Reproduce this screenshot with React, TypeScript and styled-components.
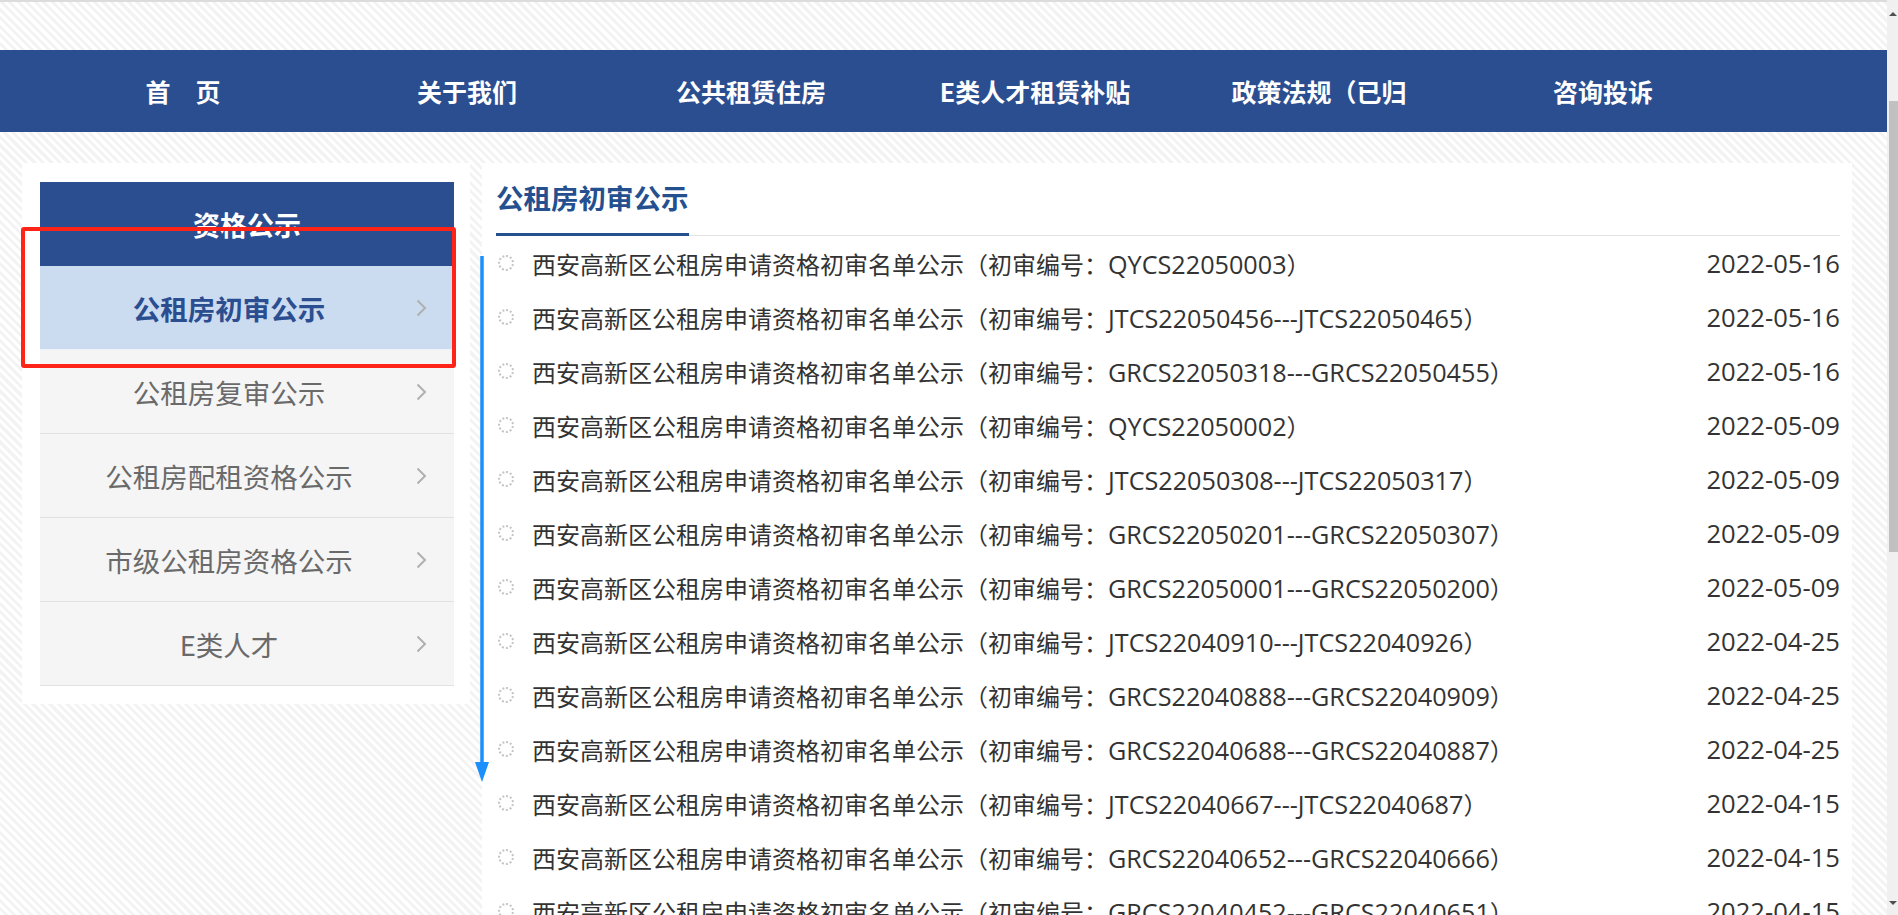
import styled, { createGlobalStyle } from "styled-components";

const GlobalStyle = createGlobalStyle`
  html, body {
    margin: 0;
    padding: 0;
    overflow: hidden;
  }
  body {
    font-family: "Open Sans", "Noto Sans CJK SC", sans-serif;
    color: #333;
  }
`;

const BLUE = "#2b4e90";

const Frame = styled.div`
  display: flex;
  height: 915px;
  overflow: hidden;
`;

const Page = styled.div`
  flex: 1;
  position: relative;
  overflow: hidden;
  background: repeating-linear-gradient(45deg, #ffffff 0 3px, #f3f3f3 3px 6px);
`;

const TopLine = styled.div`
  height: 2px;
  background: #dcdcdc;
  margin-bottom: 48px;
`;

const Nav = styled.nav`
  display: flex;
  height: 82px;
  padding-left: 41px;
  background: ${BLUE};
`;

const NavItem = styled.a`
  width: 284px;
  display: flex;
  align-items: center;
  justify-content: center;
  color: #fff;
  font-family: "Noto Sans CJK SC", sans-serif;
  font-size: 25px;
  font-weight: 700;
  white-space: pre;
  cursor: pointer;
`;

const Main = styled.div`
  display: flex;
  align-items: flex-start;
  gap: 12px;
  padding: 31px 35px 0 22px;
`;

const Sidebar = styled.aside`
  width: 448px;
  box-sizing: border-box;
  padding: 19px 16px 18px 18px;
  background: #fff;
`;

const SideHead = styled.div`
  height: 84px;
  display: flex;
  align-items: center;
  justify-content: center;
  background: ${BLUE};
  color: #fff;
  font-family: "Noto Sans CJK SC", sans-serif;
  font-size: 27px;
  font-weight: 700;
`;

const SideItem = styled.a<{ $active?: boolean }>`
  display: flex;
  align-items: center;
  height: 84px;
  box-sizing: border-box;
  border-bottom: 1px solid ${(p) => (p.$active ? "#eef2f8" : "#e2e2e2")};
  background: ${(p) => (p.$active ? "#cbdbf0" : "#f5f5f5")};
  color: ${(p) => (p.$active ? BLUE : "#6a6a6a")};
  font-family: "Noto Sans CJK SC", sans-serif;
  font-size: 27.5px;
  font-weight: ${(p) => (p.$active ? 700 : 400)};
  cursor: pointer;
`;

const SideLabel = styled.span`
  flex: 1;
  text-align: center;
  padding-left: 22px;
`;

const Chevron = styled.svg`
  width: 11px;
  height: 18px;
  margin: 0 27px 0 20px;
`;

const Content = styled.section`
  flex: 1;
  min-height: 900px;
  box-sizing: border-box;
  padding: 0 12px 0 14px;
  background: #fff;
`;

const TitleBar = styled.div`
  border-bottom: 1px solid #e3e3e3;
  padding-top: 14px;
`;

const Title = styled.h2`
  display: inline-block;
  margin: 0 0 -1px;
  padding-bottom: 16px;
  line-height: 40px;
  border-bottom: 3px solid #24508f;
  color: #24508f;
  font-family: "Noto Sans CJK SC", sans-serif;
  font-size: 27.5px;
  font-weight: 700;
`;

const List = styled.ul`
  list-style: none;
  margin: 0;
  padding: 0;
`;

const Row = styled.li`
  display: flex;
  align-items: center;
  height: 54px;
  font-size: 24px;
  color: #333;
`;

const Dot = styled.span`
  width: 16px;
  height: 16px;
  box-sizing: border-box;
  border: 2px dotted #c4c4c4;
  border-radius: 50%;
  margin: 0 18px 0 2px;
  flex-shrink: 0;
`;

const RowTitle = styled.a`
  flex: 1;
  white-space: nowrap;
  overflow: hidden;
  color: #333;
`;

const Code = styled.span`
  font-size: 25.2px;
`;

const RowDate = styled.span`
  color: #333;
  font-size: 25.6px;
`;

const RedBox = styled.div`
  position: absolute;
  left: 21px;
  top: 227px;
  width: 435px;
  height: 141px;
  box-sizing: border-box;
  border: 4px solid #ff2418;
  border-radius: 3px;
  pointer-events: none;
`;

const Arrow = styled.svg`
  position: absolute;
  left: 473px;
  top: 256px;
  pointer-events: none;
`;

const Scrollbar = styled.div`
  width: 11px;
  display: flex;
  flex-direction: column;
  align-items: flex-end;
  background: #f0f0f0;
`;

const ScrollArrow = styled.div<{ $down?: boolean }>`
  width: 0;
  height: 0;
  margin: ${(p) => (p.$down ? "auto 1px 10px 0" : "12px 1px 0 0")};
  border-left: 4px solid transparent;
  border-right: 4px solid transparent;
  ${(p) =>
    p.$down ? "border-top: 4px solid #505050;" : "border-bottom: 4px solid #505050;"}
`;

const Thumb = styled.div`
  width: 9px;
  height: 451px;
  margin-top: 85px;
  background: #c1c1c1;
`;

const navItems = ["首　页", "关于我们", "公共租赁住房", "E类人才租赁补贴", "政策法规（已归", "咨询投诉"];

const sideItems = ["公租房初审公示", "公租房复审公示", "公租房配租资格公示", "市级公租房资格公示", "E类人才"];

const rows: [string, string][] = [
  ["QYCS22050003", "2022-05-16"],
  ["JTCS22050456---JTCS22050465", "2022-05-16"],
  ["GRCS22050318---GRCS22050455", "2022-05-16"],
  ["QYCS22050002", "2022-05-09"],
  ["JTCS22050308---JTCS22050317", "2022-05-09"],
  ["GRCS22050201---GRCS22050307", "2022-05-09"],
  ["GRCS22050001---GRCS22050200", "2022-05-09"],
  ["JTCS22040910---JTCS22040926", "2022-04-25"],
  ["GRCS22040888---GRCS22040909", "2022-04-25"],
  ["GRCS22040688---GRCS22040887", "2022-04-25"],
  ["JTCS22040667---JTCS22040687", "2022-04-15"],
  ["GRCS22040652---GRCS22040666", "2022-04-15"],
  ["GRCS22040452---GRCS22040651", "2022-04-15"],
];

function App() {
  return (
    <>
      <GlobalStyle />
      <Frame>
        <Page>
          <TopLine />
          <Nav>
            {navItems.map((n) => (
              <NavItem key={n}>{n}</NavItem>
            ))}
          </Nav>
          <Main>
            <Sidebar>
              <SideHead>资格公示</SideHead>
              {sideItems.map((s, i) => (
                <SideItem key={s} $active={i === 0}>
                  <SideLabel>{s}</SideLabel>
                  <Chevron viewBox="0 0 11 18">
                    <polyline points="1.5,1.5 9,9 1.5,16.5" fill="none" stroke="#b0b0b0" strokeWidth="2" />
                  </Chevron>
                </SideItem>
              ))}
            </Sidebar>
            <Content>
              <TitleBar>
                <Title>公租房初审公示</Title>
              </TitleBar>
              <List>
                {rows.map(([code, date]) => (
                  <Row key={code}>
                    <Dot />
                    <RowTitle>
                      西安高新区公租房申请资格初审名单公示（初审编号：<Code>{code}</Code>）
                    </RowTitle>
                    <RowDate>{date}</RowDate>
                  </Row>
                ))}
              </List>
            </Content>
          </Main>
          <RedBox />
          <Arrow width="18" height="528" viewBox="0 0 18 528">
            <line x1="9" y1="0" x2="9" y2="510" stroke="#1b8ffc" strokeWidth="3.5" />
            <polygon points="2,506 16,506 9,526" fill="#1b8ffc" />
          </Arrow>
        </Page>
        <Scrollbar>
          <ScrollArrow />
          <Thumb />
          <ScrollArrow $down />
        </Scrollbar>
      </Frame>
    </>
  );
}

export default App;
